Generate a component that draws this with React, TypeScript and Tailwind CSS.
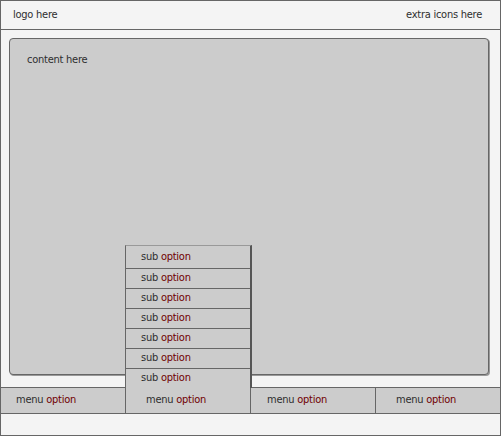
import React from 'react';

const subItems = [1, 2, 3, 4, 5, 6, 7];

const menu = [
  { id: 1, pad: 'pl-[15px]', border: true, sub: false },
  { id: 2, pad: 'pl-[20px]', border: true, sub: true },
  { id: 3, pad: 'pl-[16px]', border: true, sub: false },
  { id: 4, pad: 'pl-[20px]', border: false, sub: false },
];

const Label: React.FC<{ first: string }> = ({ first }) => (
  <span>
    {first} <span className="text-[#700000]">option</span>
  </span>
);

const App: React.FC = () => {
  return (
    <div
      className="w-[501px] h-[436px] border border-[#666] bg-[#f4f4f4] flex flex-col text-[11px] tracking-[-0.25px] text-[#2e2e2e]"
      style={{ fontFamily: '"DejaVu Sans Condensed", "DejaVu Sans", sans-serif' }}
    >
      {/* header */}
      <div className="h-[29px] shrink-0 border-b border-[#666] flex items-center justify-between pl-[12px] pr-[18px]">
        <div>logo here</div>
        <div>extra icons here</div>
      </div>

      {/* main */}
      <div className="h-[357px] shrink-0 pt-2 pl-2 pr-[11px] pb-3 flex">
        <div className="flex-1 bg-[#cccccc] border border-[#666] rounded-[4px] shadow-[1px_1px_0_#999] pt-[13px] pl-[17px]">
          content here
        </div>
      </div>

      {/* menu bar */}
      <div className="h-[27px] shrink-0 border-y border-[#666] bg-[#cccccc] flex">
        {menu.map((m) => (
          <div
            key={m.id}
            className={`relative flex items-center ${m.pad} ${m.border ? 'w-[125px] border-r border-[#666]' : 'flex-1'}`}
          >
            <Label first="menu" />
            {m.sub && (
              <div className="absolute left-[-1px] bottom-full w-[127px] bg-[#cccccc] border-l border-[#666] border-r-2 border-r-[#555] border-t border-t-[#999]">
                {subItems.map((s, i) => (
                  <div
                    key={s}
                    className={`flex items-center pl-[15px] ${i === 0 ? 'h-[22px]' : 'h-[20px] border-t border-[#666]'}`}
                  >
                    <Label first="sub" />
                  </div>
                ))}
              </div>
            )}
          </div>
        ))}
      </div>

      {/* footer */}
      <div className="flex-1" />
    </div>
  );
};

export default App;
